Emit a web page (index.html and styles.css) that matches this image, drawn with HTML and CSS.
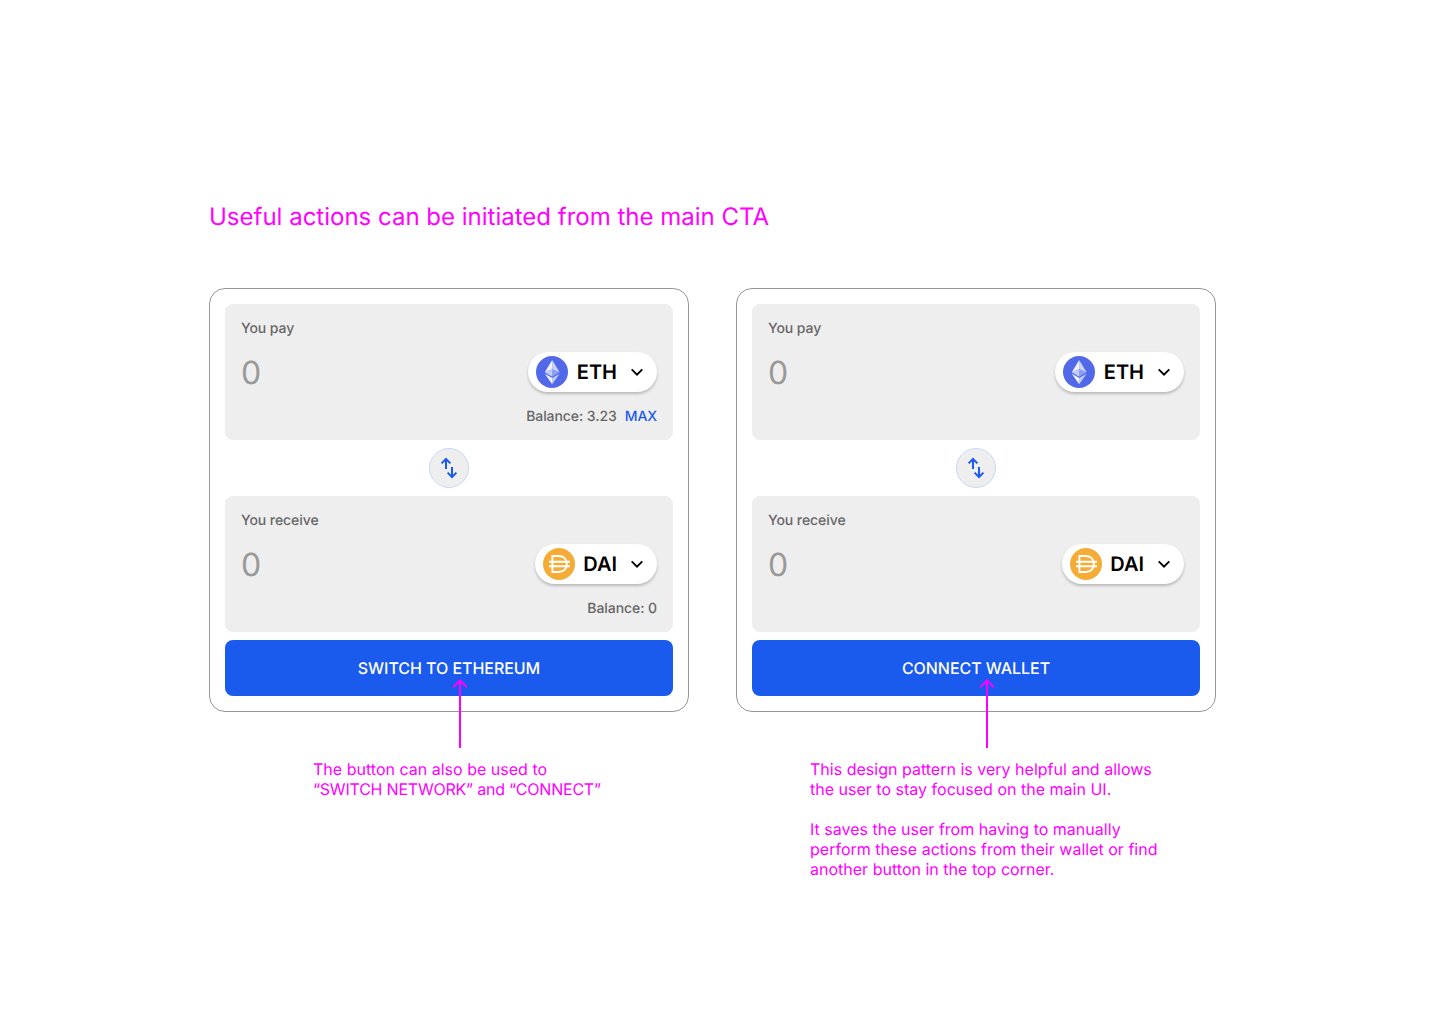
FILE: index.html
```html
<!DOCTYPE html>
<html lang="en">
<head>
<meta charset="utf-8">
<title>Main CTA actions</title>
<link rel="stylesheet" href="styles.css">
</head>
<body>
<svg class="sprite" aria-hidden="true">
  <symbol id="eth" viewBox="0 0 32 32">
    <circle cx="16" cy="16" r="16" fill="#5169e8"/>
    <path d="M16.2 4 8.8 16.3l7.4-3.3z" fill="#fff" fill-opacity=".9"/>
    <path d="M16.2 4v9l7.4 3.3z" fill="#fff" fill-opacity=".7"/>
    <path d="M8.8 16.3 16.2 13v7.7z" fill="#fff" fill-opacity=".65"/>
    <path d="M23.6 16.3 16.2 13v7.7z" fill="#fff" fill-opacity=".35"/>
    <path d="M8.8 17.7l7.4 4.4v6.1z" fill="#fff" fill-opacity=".95"/>
    <path d="M23.6 17.7l-7.4 4.4v6.1z" fill="#fff" fill-opacity=".65"/>
  </symbol>
  <symbol id="dai" viewBox="0 0 32 32">
    <circle cx="16" cy="16" r="16" fill="#f5ac37"/>
    <path d="M9.4 13.5V8h6.2c5 0 8.2 3.2 8.2 8s-3.2 8-8.2 8H9.4v-5.5M6 13.8h21M6 18.2h21M9.4 13.8v4.4" fill="none" stroke="#fff" stroke-width="1.9"/>
  </symbol>
  <symbol id="chevron" viewBox="0 0 24 24">
    <path d="m6.7 9.4 5.3 5.2 5.3-5.2" fill="none" stroke="#000" stroke-width="1.9"/>
  </symbol>
  <symbol id="swap" viewBox="0 0 24 24">
    <path d="M9 13V3.6M4.6 7.4 9 3l4.4 4.4M15 11v9.4M10.6 16.6 15 21l4.4-4.4" fill="none" stroke="#1a5aec" stroke-width="2"/>
  </symbol>
  <symbol id="arrow" viewBox="0 0 16 69">
    <path d="M8 69V1.4M1.2 8.2 8 1.4l6.8 6.8" fill="none" stroke="#f0f" stroke-width="2"/>
  </symbol>
</svg>

<main class="board">
  <h1 class="title">Useful actions can be initiated from the main CTA</h1>
  <div class="examples">
    <section class="example">
      <div class="card">
        <div class="panel">
          <div class="label">You pay</div>
          <div class="row">
            <span class="amount">0</span>
            <button class="token"><svg class="coin"><use href="#eth"/></svg><span class="eth">ETH</span><svg class="chevron"><use href="#chevron"/></svg></button>
          </div>
          <div class="balance"><span>Balance: 3.23</span><span class="max">MAX</span></div>
        </div>
        <button class="swap" aria-label="Swap tokens"><svg class="swap-icon"><use href="#swap"/></svg></button>
        <div class="panel">
          <div class="label">You receive</div>
          <div class="row">
            <span class="amount">0</span>
            <button class="token"><svg class="coin"><use href="#dai"/></svg><span>DAI</span><svg class="chevron"><use href="#chevron"/></svg></button>
          </div>
          <div class="balance"><span>Balance: 0</span></div>
        </div>
        <button class="cta">SWITCH TO ETHEREUM</button>
        <svg class="arrow"><use href="#arrow"/></svg>
      </div>
      <div class="note note-left">
        <p>The button can also be used to<br><span class="caps">“SWITCH NETWORK” and “CONNECT”</span></p>
      </div>
    </section>

    <section class="example">
      <div class="card">
        <div class="panel">
          <div class="label">You pay</div>
          <div class="row">
            <span class="amount">0</span>
            <button class="token"><svg class="coin"><use href="#eth"/></svg><span class="eth">ETH</span><svg class="chevron"><use href="#chevron"/></svg></button>
          </div>
        </div>
        <button class="swap" aria-label="Swap tokens"><svg class="swap-icon"><use href="#swap"/></svg></button>
        <div class="panel">
          <div class="label">You receive</div>
          <div class="row">
            <span class="amount">0</span>
            <button class="token"><svg class="coin"><use href="#dai"/></svg><span>DAI</span><svg class="chevron"><use href="#chevron"/></svg></button>
          </div>
        </div>
        <button class="cta">CONNECT WALLET</button>
        <svg class="arrow"><use href="#arrow"/></svg>
      </div>
      <div class="note note-right">
        <p>This design pattern is very helpful and allows<br>the user to stay focused on the main UI.</p>
        <p>It saves the user from having to manually<br>perform these actions from their wallet or find<br>another button in the top corner.</p>
      </div>
    </section>
  </div>
</main>
</body>
</html>
```
FILE: styles.css
```css
* {
  box-sizing: border-box;
}

body {
  margin: 0;
  background: #fff;
  font-family: Inter, "Liberation Sans", sans-serif;
  text-rendering: geometricPrecision;
}

button {
  border: 0;
  font-family: inherit;
  text-rendering: inherit;
}

svg {
  display: block;
  flex: none;
}

.sprite {
  position: absolute;
  width: 0;
  height: 0;
}

.board {
  height: 1024px;
  padding: 202px 0 0 209px;
}

.title {
  margin: 0 0 56px;
  color: #f0f;
  font-size: 24px;
  font-weight: 400;
  line-height: 30px;
}

.examples {
  display: flex;
  gap: 47px;
}

.example {
  width: 480px;
}

.card {
  position: relative;
  display: flex;
  flex-direction: column;
  gap: 8px;
  height: 424px;
  padding: 15px;
  border: 1px solid #969696;
  border-radius: 16px;
}

.panel {
  display: flex;
  flex-direction: column;
  gap: 16px;
  height: 136px;
  padding: 16px;
  border-radius: 8px;
  background: #eee;
}

.label,
.balance {
  height: 16px;
  color: #666;
  font-size: 14px;
  font-weight: 500;
  letter-spacing: -0.07px;
  line-height: 18px;
}

.row {
  display: flex;
  align-items: center;
  justify-content: space-between;
  height: 40px;
}

.amount {
  padding-top: 2px;
  color: #999;
  font-size: 32px;
  line-height: 40px;
}

.token {
  display: flex;
  align-items: center;
  gap: 8px;
  height: 40px;
  padding: 0 8px;
  border-radius: 20px;
  background: #fff;
  box-shadow: 0 2px 3px rgba(0, 0, 0, 0.22);
  color: #000;
  font-size: 20px;
  font-weight: 600;
  line-height: 24px;
}

.eth {
  width: 41px;
  text-align: right;
}

.coin {
  width: 32px;
  height: 32px;
}

.chevron {
  width: 24px;
  height: 24px;
}

.balance {
  display: flex;
  justify-content: flex-end;
  gap: 8px;
}

.max {
  color: #1a5aec;
}

.swap {
  display: flex;
  align-items: center;
  justify-content: center;
  align-self: center;
  width: 40px;
  height: 40px;
  padding: 0;
  border: 1px solid #c8d7fa;
  border-radius: 50%;
  background: #eee;
}

.swap-icon {
  width: 24px;
  height: 24px;
}

.cta {
  height: 56px;
  padding: 0;
  border-radius: 8px;
  background: #1a5aec;
  color: #fff;
  font-size: 16px;
  font-weight: 500;
  letter-spacing: -0.05px;
  line-height: 20px;
}

.arrow {
  position: absolute;
  top: 390px;
  left: 242px;
  width: 16px;
  height: 69px;
}

.note {
  padding-top: 47px;
  color: #f0f;
  font-size: 16px;
  letter-spacing: 0.01px;
  line-height: 20px;
}

.note-left {
  padding-left: 104px;
}

.note-right {
  padding-left: 74px;
}

.note p {
  margin: 0 0 20px;
}

.caps {
  letter-spacing: -0.22px;
}
```
